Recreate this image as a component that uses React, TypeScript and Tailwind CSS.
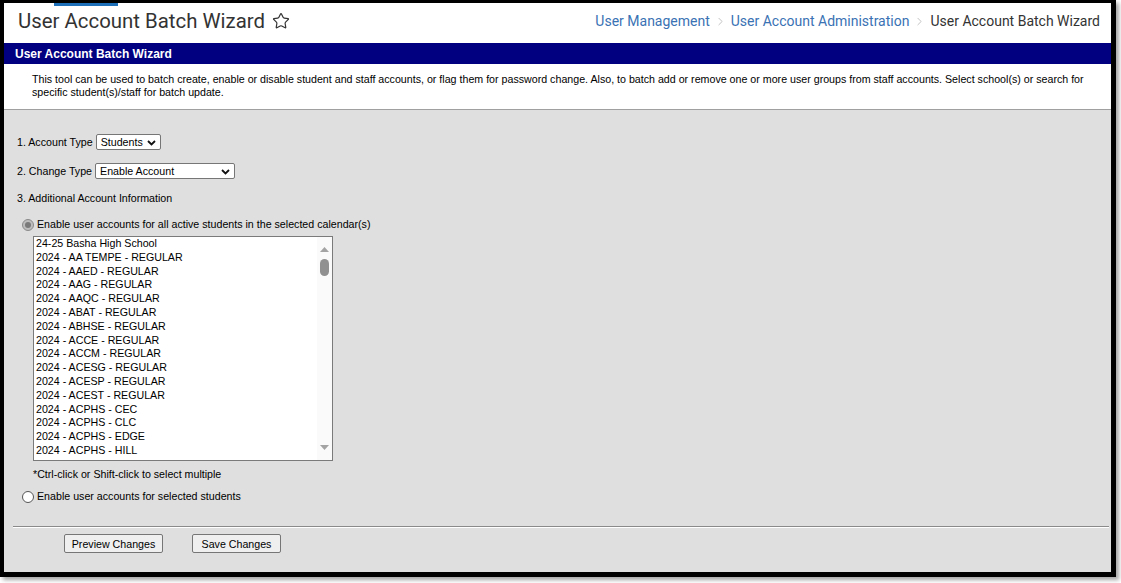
import React from 'react';
import { Star, ChevronRight } from 'lucide-react';

const calendars = [
  '24-25 Basha High School',
  '2024 - AA TEMPE - REGULAR',
  '2024 - AAED - REGULAR',
  '2024 - AAG - REGULAR',
  '2024 - AAQC - REGULAR',
  '2024 - ABAT - REGULAR',
  '2024 - ABHSE - REGULAR',
  '2024 - ACCE - REGULAR',
  '2024 - ACCM - REGULAR',
  '2024 - ACESG - REGULAR',
  '2024 - ACESP - REGULAR',
  '2024 - ACEST - REGULAR',
  '2024 - ACPHS - CEC',
  '2024 - ACPHS - CLC',
  '2024 - ACPHS - EDGE',
  '2024 - ACPHS - HILL',
];

// Fake native select, drawn so it matches the old Chrome look
function SelectBox({ value, width }: { value: string; width: string }) {
  return (
    <div
      className={`ml-[3px] flex h-[16px] items-center justify-between rounded-[2px] border border-[#767676] bg-white pl-[4px] pr-[4px] ${width}`}
    >
      <span className="leading-[13px] text-black">{value}</span>
      <svg width="9" height="6" viewBox="0 0 9 6" className="mt-px">
        <path d="M1 1 L4.5 4.5 L8 1" stroke="#111" strokeWidth="1.8" fill="none" />
      </svg>
    </div>
  );
}

function Radio({ checked }: { checked?: boolean }) {
  if (checked) {
    return (
      <span className="flex h-[12px] w-[12px] items-center justify-center rounded-full border border-[#8a8a8a] bg-[#bdbdbd]">
        <span className="h-[6px] w-[6px] rounded-full bg-[#7a7a7a]" />
      </span>
    );
  }
  return <span className="h-[12px] w-[12px] rounded-full border border-[#555] bg-white" />;
}

function Breadcrumb() {
  return (
    <div className="flex items-center text-[14px] font-['Roboto',sans-serif]">
      <span className="text-[#3a72b4]">User Management</span>
      <ChevronRight className="mx-[4px] text-[#b5b5b5]" size={13} strokeWidth={1.5} />
      <span className="text-[#3a72b4]">User Account Administration</span>
      <ChevronRight className="mx-[4px] text-[#b5b5b5]" size={13} strokeWidth={1.5} />
      <span className="text-[#333]">User Account Batch Wizard</span>
    </div>
  );
}

export default function App() {
  return (
    <div className="h-[583px] w-[1121px] bg-white font-['Liberation_Sans',Arial,sans-serif] text-[10.67px] text-[#1a1a1a]">
      <div className="flex h-[577px] w-[1116px] flex-col border-b-[5px] border-l-4 border-r-[5px] border-t-[3px] border-black shadow-[3px_3px_4px_rgba(0,0,0,0.35)]">
        {/* page header */}
        <div className="relative flex h-[40px] items-center justify-between bg-white pb-[4px] pl-[14px] pr-[11px]">
          <div className="absolute left-[50px] top-0 h-[3px] w-[64px] bg-[#1d6fb8]" />
          <div className="flex items-center">
            <h1 className="font-['Roboto',sans-serif] text-[20.4px] font-normal text-[#333]">User Account Batch Wizard</h1>
            <Star className="ml-[7px] text-[#333]" size={18} strokeWidth={1.6} />
          </div>
          <Breadcrumb />
        </div>

        {/* section title bar */}
        <div className="flex h-[21px] items-center bg-[#000080] pl-[11px] text-[12px] font-bold text-white">
          User Account Batch Wizard
        </div>

        <div className="h-[46px] border-b border-[#a0a0a0] bg-white pl-[28px] pr-[20px] pt-[9px] leading-[13px] text-black">
          This tool can be used to batch create, enable or disable student and staff accounts, or flag them for password
          change. Also, to batch add or remove one or more user groups from staff accounts. Select school(s) or search for
          specific student(s)/staff for batch update.
        </div>

        {/* form body */}
        <div className="flex flex-1 flex-col bg-[#dfdfdf] pl-[9px] pr-[2px]">
          <div className="flex flex-col pl-[4px] text-black">
            <div className="mt-[24px] flex items-center">
              <span>1. Account Type</span>
              <SelectBox value="Students" width="w-[65px]" />
            </div>
            <div className="mt-[13px] flex items-center">
              <span>2. Change Type</span>
              <SelectBox value="Enable Account" width="w-[140px]" />
            </div>
            <div className="mt-[13px] leading-[13px]">3. Additional Account Information</div>
            <div className="mt-[13px] flex items-center pl-[5px]">
              <Radio checked />
              <span className="ml-[3px] leading-[13px]">Enable user accounts for all active students in the selected calendar(s)</span>
            </div>

            {/* calendar listbox */}
            <div className="ml-[16px] mt-[5px] flex h-[225px] w-[300px] border border-[#7a7a7a] bg-white">
              <div className="flex-1 overflow-hidden pl-[2px]">
                {calendars.map((c) => (
                  <div key={c} className="h-[13.8px] whitespace-nowrap leading-[13.8px] text-black">
                    {c}
                  </div>
                ))}
              </div>
              <div className="flex w-[15px] flex-col items-center bg-[#fafafa] pt-[10px] pb-[10px]">
                <svg width="9" height="5" viewBox="0 0 9 5">
                  <path d="M0 5 L4.5 0 L9 5 Z" fill="#a3a3a3" />
                </svg>
                <div className="mt-[7px] h-[17px] w-[9px] rounded-full bg-[#909090]" />
                <div className="flex-1" />
                <svg width="9" height="5" viewBox="0 0 9 5">
                  <path d="M0 0 L4.5 5 L9 0 Z" fill="#a3a3a3" />
                </svg>
              </div>
            </div>

            <div className="ml-[16px] mt-[7px] leading-[13px]">*Ctrl-click or Shift-click to select multiple</div>
            <div className="mt-[9px] flex items-center pl-[5px]">
              <Radio />
              <span className="ml-[3px] leading-[13px]">Enable user accounts for selected students</span>
            </div>
          </div>

          <div className="mt-[23px] border-b border-t border-b-white border-t-[#8a8a8a]" />

          <div className="mt-[6px] flex items-center pl-[51px]">
            <button className="h-[19px] w-[99px] rounded-[2px] border border-[#767676] bg-[#efefef] text-black">
              Preview Changes
            </button>
            <button className="ml-[29px] h-[19px] w-[89px] rounded-[2px] border border-[#767676] bg-[#efefef] text-black">
              Save Changes
            </button>
          </div>
        </div>
      </div>
    </div>
  );
}
